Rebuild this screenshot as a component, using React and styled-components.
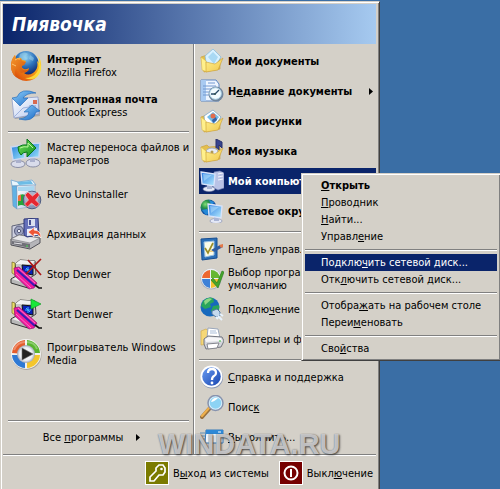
import React from "react";
import styled, { createGlobalStyle, css } from "styled-components";

const face = "#d4d0c8";
const navy = "#0a246a";

const GlobalStyle = createGlobalStyle`
  * { box-sizing: border-box; }
  body {
    margin: 0;
    background: #3a6ea5;
    color: #000;
    font: 11px/13px "DejaVu Sans Condensed", "DejaVu Sans", sans-serif;
  }
  button { font: inherit; color: inherit; cursor: default; }
`;

const Desktop = styled.main`
  display: flex;
  min-height: 100vh;
  padding-top: 1px;
  background: #3a6ea5;
  overflow: hidden;
`;

const StartMenu = styled.section`
  position: relative;
  display: flex;
  flex-direction: column;
  width: 76%;
  min-width: 370px;
  padding: 2px 3px 0 2px;
  background: ${face};
  border: 1px solid ${face};
  border-right-color: #404040;
  border-bottom: 0;
  box-shadow: inset 1px 1px #fff, inset -1px 0 #808080;
`;

const Header = styled.header`
  display: flex;
  align-items: center;
  height: 40px;
  padding: 0 9px;
  background: linear-gradient(90deg, ${navy}, #a6caf0);
`;

const UserName = styled.h1`
  margin: 0;
  color: #fff;
  font: italic bold 19px/24px "DejaVu Sans Condensed", "DejaVu Sans", sans-serif;
`;

const Columns = styled.div`
  display: grid;
  grid-template-columns: 190fr 183fr;
`;

const Column = styled.nav`
  display: flex;
  flex-direction: column;
  padding: 2px 4px 2px 5px;
  min-width: 0;
`;

const PlacesColumn = styled(Column)`
  padding: 2px 0 2px 5px;
  border-left: 1px solid #808080;
  box-shadow: inset 1px 0 #fff;
`;

const Separator = styled.hr`
  flex: none;
  width: 100%;
  height: 2px;
  margin: ${(p) => p.$gap || "5px 0 1px"};
  border: 0;
  border-top: 1px solid #808080;
  border-bottom: 1px solid #fff;
`;

const Item = styled.button`
  display: flex;
  align-items: center;
  width: 100%;
  padding: 0;
  border: 0;
  background: none;
  text-align: left;
  svg { flex: none; }
`;

const ProgramItem = styled(Item)`
  height: 40px;
  gap: 5px;
  padding-left: 2px;
  white-space: nowrap;
`;

const PlaceItem = styled(Item)`
  height: 26px;
  margin: 2px 0;
  gap: 4px;
  padding: 0 3px 0 1px;
  white-space: nowrap;
  font-weight: ${(p) => (p.$strong ? "bold" : "normal")};
  ${(p) => p.$selected && css`background: ${navy}; color: #fff;`}
`;

const Label = styled.span`
  flex: 1;
  small { display: block; font-size: 11px; }
`;

const AllPrograms = styled(Item)`
  justify-content: center;
  gap: 13px;
  height: 30px;
  padding-right: 14px;
`;

const Spacer = styled.div`
  flex: 1;
`;

const Anchor = styled.div`
  position: relative;
`;

const ContextMenu = styled.div`
  position: absolute;
  z-index: 3;
  left: 102px;
  top: 7px;
  min-width: 199px;
  padding: 3px;
  background: ${face};
  border: 1px solid ${face};
  border-right-color: #404040;
  border-bottom-color: #404040;
  box-shadow: inset 1px 1px #fff, inset -1px -1px #808080;
`;

const Command = styled.button`
  display: block;
  width: 100%;
  height: 17px;
  padding: 0 16px;
  border: 0;
  text-align: left;
  white-space: nowrap;
  line-height: 16px;
  font-weight: ${(p) => (p.$strong ? "bold" : "normal")};
  background: ${(p) => (p.$selected ? navy : "none")};
  color: ${(p) => (p.$selected ? "#fff" : "#000")};
`;

const Footer = styled.footer`
  display: flex;
  justify-content: flex-end;
  align-items: center;
  gap: 10px;
  flex: 1;
  min-height: 34px;
  padding: 2px 3px 0 0;
  border-top: 1px solid #808080;
  box-shadow: inset 0 1px #fff;
`;

const SessionButton = styled.button`
  display: flex;
  align-items: center;
  gap: 4px;
  padding: 0;
  border: 0;
  background: none;
  white-space: nowrap;
`;

const Watermark = styled.div`
  position: absolute;
  z-index: 2;
  left: 157px;
  bottom: 28px;
  color: rgba(208, 208, 210, 0.88);
  font: bold 29px/34px "Liberation Sans", Arial, sans-serif;
  text-shadow: 1px 1px 2px rgba(50, 50, 50, 0.85), 0 0 1px rgba(90, 90, 90, 0.6);
  pointer-events: none;
`;

const Big = ({ children }) => (
  <svg width="32" height="32" viewBox="0 0 32 32" aria-hidden="true">{children}</svg>
);
const Small = ({ children }) => (
  <svg width="24" height="24" viewBox="0 0 24 24" aria-hidden="true">{children}</svg>
);
const Arrow = () => (
  <svg width="4" height="7" viewBox="0 0 4 7" aria-hidden="true"><path d="M0 0l4 3.5L0 7z" fill="currentColor" /></svg>
);

const Lin = ({ id, a, b }) => (
  <linearGradient id={id} x1="0" y1="0" x2="1" y2="1">
    <stop stopColor={a} /><stop offset="1" stopColor={b} />
  </linearGradient>
);

const FirefoxIcon = () => (
  <Big>
    <defs>
      <radialGradient id="ffGlobe" cx=".5" cy=".25" r=".7"><stop stopColor="#8fd0f0" /><stop offset=".5" stopColor="#2f74bd" /><stop offset="1" stopColor="#12286e" /></radialGradient>
      <linearGradient id="ffTail" x1="1" y1="0" x2="0" y2="1"><stop stopColor="#fff04a" /><stop offset=".35" stopColor="#f9a81c" /><stop offset=".75" stopColor="#e4610f" /><stop offset="1" stopColor="#b93207" /></linearGradient>
      <Lin id="ffHead" a="#f79a2c" b="#cf4a08" />
    </defs>
    <circle cx="16" cy="13.5" r="12.5" fill="url(#ffGlobe)" />
    <path d="M10 4q5-3 8 0l-3 3 3 2-4 2-5-3zM20 5l4 3-1 3-4-2z" fill="#a8dcee" opacity=".45" />
    <path d="M27 5q5 5 4 12-1 8-7 12-8 4-15 0Q1 25 1 16 1 9 5 5l1 4q2-2 5-1l1 2q2 0 4 1-1 3-4 4-1 3 2 4 2 1 5-1-1 4-5 5 4 3 9 0 6-4 4-12l2 2q1-4-2-8z" fill="url(#ffTail)" />
    <path d="M5 5q-4 5-4 11 0 7 5 11-2-5 0-8l5 4 5-1q3-1 3-3-3 2-5 1-3-1-2-4 3-1 4-4l-4-1-1-2q-3-1-5 1z" fill="url(#ffHead)" />
    <path d="M28 9q3 7-1 13-4 6-12 6 7 3 12-1 5-5 4-11-1-4-3-7z" fill="#ffe33d" opacity=".85" />
    <path d="M5 10q2-2 5-1M2 14l4 2" stroke="#ffc36c" fill="none" />
  </Big>
);

const MailIcon = () => (
  <Big>
    <defs><Lin id="mailPaper" a="#fff" b="#b6c8ee" /><Lin id="mailArrow" a="#8ed0fa" b="#1464c4" /></defs>
    <path d="M4 12l25-3 1 17-25 3z" fill="#777" opacity=".45" />
    <path d="M2 9l26-2 1 17-25 4z" fill="url(#mailPaper)" stroke="#8797c4" strokeWidth=".7" />
    <path d="M4 27l9-9 6-1 10 7" fill="none" stroke="#9fb2de" />
    <path d="M23 10h4v4h-4z" fill="#d86a50" /><path d="M19 16h7M20 18h6" stroke="#8c9cc5" />
    <path d="M26 3Q11-3 7 7l-5 1 8 8 8-8-5 0q3-5 13-5z" fill="url(#mailArrow)" stroke="#1c65b5" strokeWidth=".6" />
    <path d="M9 29q14 4 17-7l4-1-8-6-8 7 5 0q-1 6-10 7z" fill="url(#mailArrow)" stroke="#1c65b5" strokeWidth=".6" />
  </Big>
);

const TransferIcon = () => (
  <Big>
    <defs><Lin id="trScreen" a="#2b82dd" b="#9be4fb" /><Lin id="trArrow" a="#7ae45b" b="#0a8d20" /></defs>
    <ellipse cx="8" cy="26" rx="7" ry="3.5" fill="#d9dceb" stroke="#8b8fa6" />
    <ellipse cx="23" cy="25" rx="7" ry="4" fill="#d9dceb" stroke="#8b8fa6" />
    <path d="M6 21h5v4H6zM20 19h5v5h-5z" fill="#aab0cc" />
    <path d="M1 9l12-2 2 13-12 2z" fill="url(#trScreen)" stroke="#cdd7f0" strokeWidth="1.5" />
    <path d="M17 6l13-1-1 14-12 1z" fill="url(#trScreen)" stroke="#cdd7f0" strokeWidth="1.5" />
    <path d="M8 9q5-3 9-2V1l9 9-9 9v-5q-4 0-6 3-3-3-3-8z" fill="url(#trArrow)" stroke="#08741a" />
    <path d="M10 10q4-2 8-1V5l5 5" stroke="#b9f59d" fill="none" />
  </Big>
);

const RevoIcon = () => (
  <Big>
    <defs><Lin id="rvBox" a="#fff" b="#b4c6e4" /></defs>
    <path d="M2 8L1 2l7 2 14-2 4 5z" fill="#e8f6fd" stroke="#86b2d5" />
    <path d="M7 4l2 3 14-1-2-3z" fill="#6cbce6" />
    <path d="M2 8h5v23l-4-3z" fill="#60b2e5" stroke="#6a94bb" strokeWidth=".6" />
    <path d="M7 8l18-1v21L7 31z" fill="url(#rvBox)" stroke="#8ca2c0" strokeWidth=".6" />
    <path d="M8 9l16-1v5H8z" fill="#a9d7f0" />
    <path d="M8 18q4-3 7-1v11q-4-2-7 0z" fill="#28a43b" /><path d="M8 18q2-2 3-1v6H8z" fill="#ee7142" />
    <circle cx="22" cy="22" r="8.8" fill="#8795b5" stroke="#4d5b80" />
    <circle cx="21.5" cy="20.5" r="7" fill="#b9c2d7" opacity=".7" />
    <path d="M15 17l3-3 4.5 4 5-4 2 3-4 5 4 4-3 3-5-4-4 4-3-3 4-4z" fill="#e52731" stroke="#fac1be" strokeWidth=".7" />
  </Big>
);

const BackupIcon = () => (
  <Big>
    <path d="M2 8l14-3 3 15-17 2z" fill="#cdcfdf" stroke="#606478" />
    <ellipse cx="9" cy="13" rx="4.5" ry="5" fill="#9ba1be" stroke="#565b7c" /><circle cx="9" cy="13" r="1.7" fill="#eceef7" stroke="#565b7c" />
    <path d="M1 21l8-4 21 3v5l-10 6L1 27z" fill="#b5b5b9" stroke="#505058" />
    <path d="M1 21l8-4 21 3-10 5z" fill="#e7e7e9" stroke="#77777c" strokeWidth=".6" />
    <path d="M2 23l18 3v4L2 26z" fill="#707078" /><path d="M4 25l8 1" stroke="#e5e5e9" /><path d="M16 28h2" stroke="#44e050" />
    <path d="M14 1l14-1 1 17-12 2-3-2z" fill="#6570ba" stroke="#303978" />
    <path d="M18 1h7v7h-7z" fill="#d9dff0" /><path d="M19 2h2v5h-2z" fill="#474f92" />
    <path d="M17 11l10-1v7l-10 1z" fill="#edf0fa" />
    <path d="M31 20q0-8-7-8l1-3-7 5 6 5v-3q4-1 7 4z" fill="#ee5738" stroke="#fff" strokeWidth=".7" />
  </Big>
);

const DenwerIcon = ({ stopped }) => (
  <Big>
    <path d="M1 21l5-3 16 5v5l-4 2L1 25z" fill="#b8b8b8" stroke="#333" />
    <path d="M2 21l5-2 14 5-4 2z" fill="#eee" />
    <path d="M5 6l5-4 15 1 1 13-6 4-13-3z" fill="#c8c8c8" stroke="#444" />
    <path d="M5 6l5-4 15 1-3 3z" fill="#f1f1f1" /><path d="M12 7l11 1v9l-10-2z" fill="#0820b8" stroke="#111" />
    <path d="M18 9v6M15 12h6M16 10l4 4" stroke="#42b9ff" />
    <path d="M2 4l3 1v12l-3-2z" fill="#e9df6b" stroke="#756b25" strokeWidth=".7" />
    <path d="M4 10l5-1 18 16-3 5-5 1L5 18z" fill="#f01b9c" stroke="#901572" strokeWidth=".7" />
    <path d="M7 12l18 16" stroke="#391bb5" strokeWidth="2.2" /><path d="M6 16l15 14M8 10l17 15" stroke="#ff70cb" />
    <path d="M25 27l4 3h3" stroke="#111" strokeWidth="1.7" fill="none" />
    {stopped
      ? <path d="M18 2l13 15M31 1L16 16" stroke="#ad1818" strokeWidth="1.7" />
      : <path d="M21 1l10 5-10 5z" fill="#18e839" stroke="#139c26" strokeWidth=".7" />}
  </Big>
);

const MediaIcon = () => (
  <Big>
    <defs><radialGradient id="mpDisc"><stop stopColor="#fff" /><stop offset=".7" stopColor="#eef0f5" /><stop offset="1" stopColor="#9ea5b5" /></radialGradient></defs>
    <circle cx="16.5" cy="17" r="15" fill="#868078" opacity=".55" />
    <circle cx="16" cy="16" r="15" fill="#f2f2f0" />
    <path d="M2 15A14 14 0 0 1 15 2v14z" fill="#e55d2c" /><path d="M17 2a14 14 0 0 1 13 13H17z" fill="#58b52e" />
    <path d="M30 17a14 14 0 0 1-13 13V17z" fill="#f4c62d" /><path d="M15 30A14 14 0 0 1 2 17h13z" fill="#2e79d4" />
    <path d="M4 12Q7 4 16 4t11 7" fill="none" stroke="#fff" strokeWidth="2" opacity=".3" />
    <circle cx="16" cy="16" r="9" fill="url(#mpDisc)" />
    <path d="M12 10l11 6-11 6z" fill="#242424" stroke="#6b6b6b" strokeWidth=".6" />
  </Big>
);

const Folder = ({ children }) => (
  <Small>
    <defs><Lin id="folderFront" a="#fff08c" b="#f0c74e" /></defs>
    <path d="M1 8l6-2 2 2 11-1v13L4 23z" fill="#e4be4d" stroke="#c79d37" strokeWidth=".6" />
    {children}
    <path d="M1 8l5 4 1 11-5-2z" fill="#fff08c" stroke="#d2ae47" strokeWidth=".5" />
    <path d="M6 13l9 2 8-6-5 12-12 2z" fill="url(#folderFront)" stroke="#c99d34" strokeWidth=".6" />
  </Small>
);
const DocumentsIcon = () => <Folder><path d="M5 7l8-7 8 8-6 10H7z" fill="#d9f1ff" stroke="#81b7dd" strokeWidth=".7" /><path d="M8 8l5-5 5 5-4 7z" fill="#a9d9f4" /></Folder>;
const PicturesIcon = () => <Folder><path d="M4 7l9-6 8 7-7 10-9-3z" fill="#fff" stroke="#6ea0c9" strokeWidth=".7" /><path d="M7 8l6-5 6 5-5 7z" fill="#73bdea" /><circle cx="13" cy="7" r="2.5" fill="#e16c4d" /><path d="M12 11l4-3 1 3-4 3z" fill="#365fa5" /></Folder>;
const MusicIcon = () => <Folder><ellipse cx="12" cy="13" rx="6" ry="4" fill="#e6ebf5" stroke="#9ba8c4" /><circle cx="12" cy="13" r="1.5" fill="#b09a55" /><path d="M16 9V0l6 3v6l-3-3v5" fill="#36438d" stroke="#27306c" /></Folder>;

const RecentIcon = () => (
  <Small>
    <path d="M1 1h15l3 4v17H1z" fill="#eef5ff" stroke="#5a85c4" /><path d="M1 1h5v21H1z" fill="#a9caf1" />
    <path d="M8 4h7M3 7h13M3 10h10M3 13h9M3 16h8" stroke="#7398d0" />
    <circle cx="16" cy="15" r="7.5" fill="#71859c" /><circle cx="15.5" cy="14.5" r="5.8" fill="#f2fbff" stroke="#aed5e9" />
    <path d="M15 15l4-4M15 15h-4" stroke="#274968" strokeWidth="1.3" /><circle cx="15" cy="15" r="1" fill="#355" />
  </Small>
);

const ComputerIcon = ({ network }) => (
  <Small>
    <defs><Lin id="pcScreen" a="#2a7be2" b="#b7edff" /><radialGradient id="pcGlobe" cx=".3" cy=".3"><stop stopColor="#83de78" /><stop offset=".5" stopColor="#239248" /><stop offset="1" stopColor="#1352a3" /></radialGradient></defs>
    {network
      ? <><circle cx="8.5" cy="8.5" r="8" fill="url(#pcGlobe)" /><path d="M2 11l5-1 2 4-3 2zM9 1l5 2-2 4z" fill="#2589d8" /></>
      : <path d="M14 3l6-1 4 2v15l-6 2-4-2z" fill="#b9c3e6" stroke="#7583b6" strokeWidth=".6" />}
    {!network && <path d="M18 5l5-1M18 8l5-1M18 11l5-1" stroke="#f4f7ff" />}
    <g transform={network ? "translate(7 2)" : undefined}>
      <ellipse cx="9" cy="20" rx="6" ry="2.5" fill="#e4e8f6" stroke="#7e88ab" strokeWidth=".6" />
      <path d="M7 15h5v5H7z" fill="#a9b4d4" />
      <path d="M1 3l14 2-1 12L2 15z" fill="url(#pcScreen)" stroke="#d9e4fa" strokeWidth="1.3" />
      <path d="M3 5l9 1-8 6z" fill="#c9f0ff" opacity=".45" />
    </g>
  </Small>
);

const ControlIcon = () => (
  <Small>
    <path d="M1 2l16-1v20L2 23z" fill="#2b6fb7" stroke="#174e92" />
    <path d="M4 5l10-1v14L5 20z" fill="#fcfce8" stroke="#9cc1e2" />
    <path d="M5 11l3 5 5-10" stroke="#9a8d27" strokeWidth="1.7" fill="none" />
    <path d="M11 13l9-5 3 2-9 5z" fill="#315da1" /><path d="M19 8l4-1v3l-2 1z" fill="#e37848" /><path d="M11 13l-2 2 5 0z" fill="#efcb79" />
  </Small>
);
const DefaultsIcon = () => (
  <Small>
    <circle cx="11" cy="12" r="10.5" fill="#aab0bb" /><circle cx="11" cy="11.5" r="10" fill="#edf0f4" />
    <path d="M2 11a9 9 0 0 1 8-8v8z" fill="#ed6730" /><path d="M11 3a9 9 0 0 1 9 8h-9z" fill="#65b731" />
    <path d="M2 12h8v9a9 9 0 0 1-8-9z" fill="#3e81d7" /><path d="M11 12h9a9 9 0 0 1-9 9z" fill="#f4c231" />
    <path d="M11 13l2-2 4 5 5-12 2 1-6 16z" fill="#46a52b" stroke="#217719" strokeWidth=".6" />
  </Small>
);
const ConnectIcon = () => (
  <Small>
    <circle cx="10" cy="10" r="9.5" fill="#1769bd" /><path d="M3 4q5-5 10-3l1 4-4 2 1 3-6 2-4-3zM13 9l6-1q1 7-5 10l-3-4z" fill="#28a55c" />
    <path d="M4 4q4-4 8-2l-7 6z" fill="#b9ed99" opacity=".7" />
    <path d="M12 14l5-2 3 3v4l-4 1-4-3z" fill="#c4d9ee" stroke="#527aa4" /><path d="M18 19l4 4M20 17l3 2M16 20l2 2" stroke="#e8f3fd" strokeWidth="2" />
  </Small>
);
const PrinterIcon = () => (
  <Small>
    <path d="M1 4l5-2 3 2v13l-8 1z" fill="#f6d878" stroke="#caa447" strokeWidth=".6" />
    <path d="M8 1l10 1 2 9H7z" fill="#fff" stroke="#9ba7bb" /><path d="M10 4h6M10 6h7" stroke="#a9bdd8" />
    <path d="M4 12l4-3 14 1 2 4-3 6-15 2-2-5z" fill="#d4d6dc" stroke="#737680" />
    <path d="M5 12l4-2 12 1 1 3-16 1z" fill="#f6f6f8" /><path d="M7 17l12-1-2 5-9 1z" fill="#fff" stroke="#85878e" /><path d="M19 14h2" stroke="#38bf39" />
  </Small>
);
const HelpIcon = () => (
  <Small>
    <defs><Lin id="helpBlue" a="#6b9cf1" b="#1645b0" /></defs>
    <circle cx="12" cy="12.5" r="11" fill="#8a98b4" /><circle cx="11.5" cy="11.5" r="11" fill="#fff" /><circle cx="11.5" cy="11.5" r="9.3" fill="url(#helpBlue)" />
    <path d="M8 8q0-4 4-4t4 4q0 2-2 3t-2 4" fill="none" stroke="#fff" strokeWidth="2.3" /><circle cx="12" cy="18" r="1.4" fill="#fff" />
  </Small>
);
const SearchIcon = () => (
  <Small>
    <path d="M10 13L2 22" stroke="#98703e" strokeWidth="4" strokeLinecap="round" /><path d="M9 13L2 21" stroke="#efb04c" strokeWidth="2.3" strokeLinecap="round" />
    <circle cx="15.5" cy="8" r="7.5" fill="#d9f1fd" stroke="#8793ae" strokeWidth="1.5" /><circle cx="15.5" cy="8" r="5.8" fill="#8dd3f4" /><path d="M11 7q2-5 7-4-4 4-7 4" fill="#fff" />
  </Small>
);
const RunIcon = () => (
  <Small>
    <path d="M6 5l17 0v13H5z" fill="#f5faff" stroke="#367ab9" /><path d="M6 5h17v4H6z" fill="#2e88d6" /><path d="M18 7h3" stroke="#fff" />
    <path d="M0 8h5M1 11h4M0 14h5" stroke="#5d8eb8" />
  </Small>
);
const LogoffIcon = () => (
  <Small>
    <path d="M0 0h24v24H0z" fill="#fff" /><path d="M1 1h22v22H1z" fill="#7b7b00" />
    <path d="M14 4h4l2 3v4l-2 3h-4l-5 6H5v-4l6-6V7z" fill="none" stroke="#fff" strokeWidth="1.7" /><circle cx="16.5" cy="8" r="1.3" fill="#fff" />
  </Small>
);
const PowerIcon = () => (
  <Small>
    <path d="M0 0h24v24H0z" fill="#fff" /><path d="M1 1h22v22H1z" fill="#750000" />
    <circle cx="12" cy="12" r="6.5" fill="none" stroke="#fff" strokeWidth="2" /><path d="M12 8v8" stroke="#fff" strokeWidth="2" />
  </Small>
);

const programs = [
  { icon: <TransferIcon />, lines: ["Мастер переноса файлов и", "параметров"] },
  { icon: <RevoIcon />, lines: ["Revo Uninstaller"] },
  { icon: <BackupIcon />, lines: ["Архивация данных"] },
  { icon: <DenwerIcon stopped />, lines: ["Stop Denwer"] },
  { icon: <DenwerIcon />, lines: ["Start Denwer"] },
  { icon: <MediaIcon />, lines: ["Проигрыватель Windows", "Media"] },
];

const Place = ({ icon, children, strong, selected, submenu }) => (
  <PlaceItem type="button" $strong={strong} $selected={selected}>
    {icon}<Label>{children}</Label>{submenu && <Arrow />}
  </PlaceItem>
);

export default function App() {
  return (
    <>
      <GlobalStyle />
      <Desktop>
        <StartMenu aria-label="Пуск">
          <Header><UserName>Пиявочка</UserName></Header>
          <Columns>
            <Column>
              <ProgramItem type="button"><FirefoxIcon /><Label><b>Интернет</b><small>Mozilla Firefox</small></Label></ProgramItem>
              <ProgramItem type="button"><MailIcon /><Label><b>Электронная почта</b><small>Outlook Express</small></Label></ProgramItem>
              <Separator />
              {programs.map(({ icon, lines }) => (
                <ProgramItem type="button" key={lines[0]}>
                  {icon}<Label>{lines[0]}{lines[1] && <><br />{lines[1]}</>}</Label>
                </ProgramItem>
              ))}
              <Spacer />
              <Separator $gap="0" />
              <AllPrograms type="button"><span>Все <u>п</u>рограммы</span><Arrow /></AllPrograms>
            </Column>
            <PlacesColumn>
              <Place strong icon={<DocumentsIcon />}>Мои документы</Place>
              <Place strong submenu icon={<RecentIcon />}>Н<u>е</u>давние документы</Place>
              <Place strong icon={<PicturesIcon />}>Мои рисунки</Place>
              <Place strong icon={<MusicIcon />}>Моя музыка</Place>
              <Anchor>
                <Place strong selected icon={<ComputerIcon />}>Мой компьютер</Place>
                <ContextMenu>
                  <Command type="button" $strong><u>О</u>ткрыть</Command>
                  <Command type="button"><u>П</u>роводник</Command>
                  <Command type="button"><u>Н</u>айти...</Command>
                  <Command type="button">Управл<u>е</u>ние</Command>
                  <Separator $gap="4px 0 3px" />
                  <Command type="button" $selected>Подклю<u>ч</u>ить сетевой диск...</Command>
                  <Command type="button">Отк<u>л</u>ючить сетевой диск...</Command>
                  <Separator $gap="4px 0 3px" />
                  <Command type="button">Отобра<u>ж</u>ать на рабочем столе</Command>
                  <Command type="button">Переи<u>м</u>еновать</Command>
                  <Separator $gap="4px 0 3px" />
                  <Command type="button">Сво<u>й</u>ства</Command>
                </ContextMenu>
              </Anchor>
              <Place strong icon={<ComputerIcon network />}>Сетевое окружение</Place>
              <Separator />
              <Place icon={<ControlIcon />}>П<u>а</u>нель управления</Place>
              <Place icon={<DefaultsIcon />}>Выбор программ по<br />умолчанию</Place>
              <Place icon={<ConnectIcon />}>Подклю<u>ч</u>ение</Place>
              <Place icon={<PrinterIcon />}>Принтеры и факсы</Place>
              <Separator />
              <Place icon={<HelpIcon />}><u>С</u>правка и поддержка</Place>
              <Place icon={<SearchIcon />}>Поис<u>к</u></Place>
              <Place icon={<RunIcon />}><u>В</u>ыполнить...</Place>
            </PlacesColumn>
          </Columns>
          <Footer>
            <SessionButton type="button"><LogoffIcon /><span>В<u>ы</u>ход из системы</span></SessionButton>
            <SessionButton type="button"><PowerIcon /><span>Выкл<u>ю</u>чение</span></SessionButton>
          </Footer>
          <Watermark>WINDATA.RU</Watermark>
        </StartMenu>
      </Desktop>
    </>
  );
}
